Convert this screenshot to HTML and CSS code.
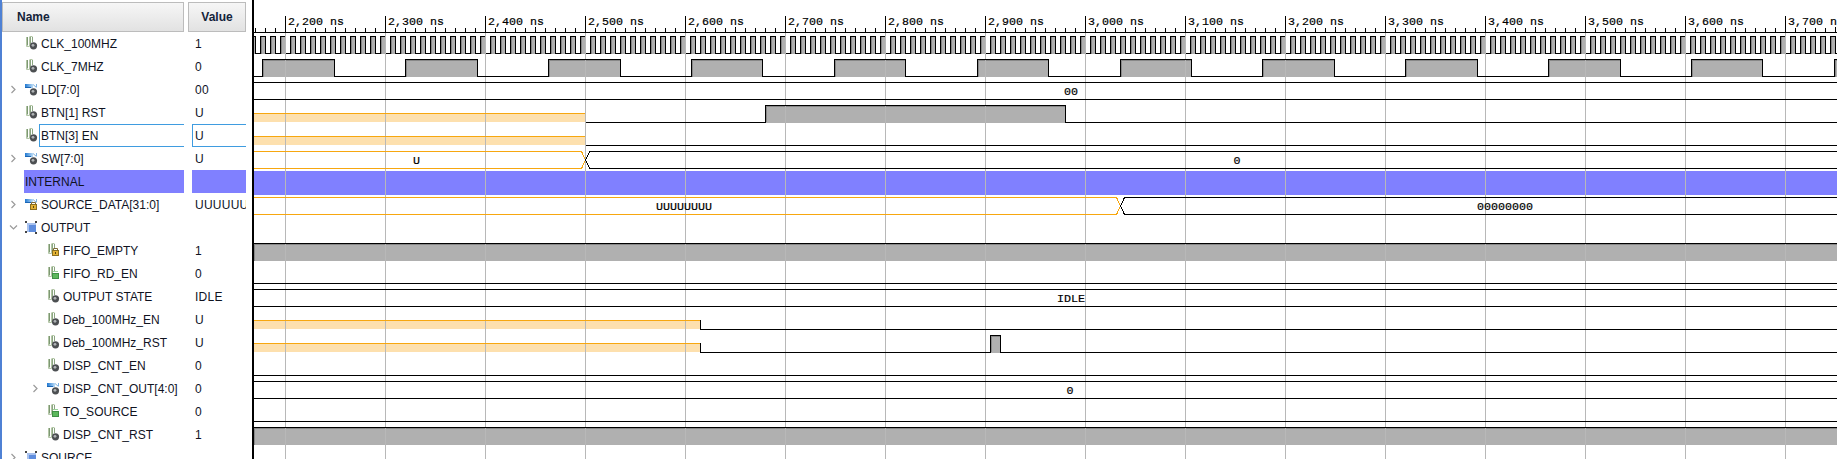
FILE: index.html
```html
<!DOCTYPE html>
<html lang="en">
<head>
<meta charset="utf-8">
<title>Waveform viewer</title>
<link rel="stylesheet" href="styles.css">
</head>
<body>
<div class="app">
  <div class="stripe"></div>
  <div class="names">
    <div class="head head-name">Name</div>
    <div class="row"><span class="chev"></span><svg class="ic"><use href="#wave"/><use href="#ball"/></svg><span class="label">CLK_100MHZ</span></div>
    <div class="row"><span class="chev"></span><svg class="ic"><use href="#wave"/><use href="#ball"/></svg><span class="label">CLK_7MHZ</span></div>
    <div class="row"><span class="chev"><svg class="ch"><use href="#right"/></svg></span><svg class="ic"><use href="#bus"/><use href="#ball"/></svg><span class="label">LD[7:0]</span></div>
    <div class="row"><span class="chev"></span><svg class="ic"><use href="#wave"/><use href="#ball"/></svg><span class="label">BTN[1] RST</span></div>
    <div class="row"><span class="chev"></span><svg class="ic"><use href="#wave"/><use href="#ball"/></svg><span class="label sel">BTN[3] EN</span></div>
    <div class="row"><span class="chev"><svg class="ch"><use href="#right"/></svg></span><svg class="ic"><use href="#bus"/><use href="#ball"/></svg><span class="label">SW[7:0]</span></div>
    <div class="row"><span class="chev"></span><span class="label divider">INTERNAL</span></div>
    <div class="row"><span class="chev"><svg class="ch"><use href="#right"/></svg></span><svg class="ic"><use href="#bus"/><use href="#lock"/></svg><span class="label">SOURCE_DATA[31:0]</span></div>
    <div class="row"><span class="chev"><svg class="ch"><use href="#down"/></svg></span><svg class="ic"><use href="#group"/></svg><span class="label">OUTPUT</span></div>
    <div class="row in"><span class="chev"></span><svg class="ic"><use href="#wave"/><use href="#lock"/></svg><span class="label">FIFO_EMPTY</span></div>
    <div class="row in"><span class="chev"></span><svg class="ic"><use href="#wave"/><use href="#green"/></svg><span class="label">FIFO_RD_EN</span></div>
    <div class="row in"><span class="chev"></span><svg class="ic"><use href="#wave"/><use href="#ball"/></svg><span class="label">OUTPUT STATE</span></div>
    <div class="row in"><span class="chev"></span><svg class="ic"><use href="#wave"/><use href="#ball"/></svg><span class="label">Deb_100MHz_EN</span></div>
    <div class="row in"><span class="chev"></span><svg class="ic"><use href="#wave"/><use href="#ball"/></svg><span class="label">Deb_100MHz_RST</span></div>
    <div class="row in"><span class="chev"></span><svg class="ic"><use href="#wave"/><use href="#ball"/></svg><span class="label">DISP_CNT_EN</span></div>
    <div class="row in"><span class="chev"><svg class="ch"><use href="#right"/></svg></span><svg class="ic"><use href="#bus"/><use href="#ball"/></svg><span class="label">DISP_CNT_OUT[4:0]</span></div>
    <div class="row in"><span class="chev"></span><svg class="ic"><use href="#wave"/><use href="#green"/></svg><span class="label">TO_SOURCE</span></div>
    <div class="row in"><span class="chev"></span><svg class="ic"><use href="#wave"/><use href="#ball"/></svg><span class="label">DISP_CNT_RST</span></div>
    <div class="row"><span class="chev"><svg class="ch"><use href="#right"/></svg></span><svg class="ic"><use href="#group"/></svg><span class="label">SOURCE</span></div>
  </div>
  <div class="values">
    <div class="head head-value">Value</div>
    <div class="vrow"><span class="val">1</span></div>
    <div class="vrow"><span class="val">0</span></div>
    <div class="vrow"><span class="val">00</span></div>
    <div class="vrow"><span class="val">U</span></div>
    <div class="vrow"><span class="val sel">U</span></div>
    <div class="vrow"><span class="val">U</span></div>
    <div class="vrow"><span class="val divider"></span></div>
    <div class="vrow"><span class="val">UUUUUUUU</span></div>
    <div class="vrow"><span class="val"></span></div>
    <div class="vrow"><span class="val">1</span></div>
    <div class="vrow"><span class="val">0</span></div>
    <div class="vrow"><span class="val">IDLE</span></div>
    <div class="vrow"><span class="val">U</span></div>
    <div class="vrow"><span class="val">U</span></div>
    <div class="vrow"><span class="val">0</span></div>
    <div class="vrow"><span class="val">0</span></div>
    <div class="vrow"><span class="val">0</span></div>
    <div class="vrow"><span class="val">1</span></div>
  </div>
  <div class="rule"></div>
  <svg class="wave" viewBox="254 0 1583 459" width="1583" height="459">
    <defs>
      <linearGradient id="busfill" x1="0" x2="1" y1="0" y2="0">
        <stop offset="0" stop-color="#1f78d2"/>
        <stop offset="1" stop-color="#bcdcf6"/>
      </linearGradient>
      <g id="wave" fill="none">
        <path d="M2.500 1V10.500H5.500V1" stroke="#b3c6a6"/>
        <path d="M3.500 1V9.500" stroke="#7d9872"/>
        <path d="M6.500 1V8M8.500 1V6" stroke="#8ba681"/>
        <path d="M5.500 .5H8.500" stroke="#b3c6a6"/>
      </g>
      <g id="bus">
        <rect x="1" y="2" width="8" height="4" fill="url(#busfill)"/>
        <path d="M1 5.500H7" stroke="#1d66b4"/>
        <path d="M9 2.500L12.500 5.500M12.500 2V5" stroke="#7fb2e0" fill="none"/>
      </g>
      <g id="ball">
        <circle cx="9.500" cy="9.800" r="3.600" fill="#4c4f52"/>
        <circle cx="9" cy="9.300" r="1.400" fill="#b0b4b6"/>
      </g>
      <g id="lock">
        <path d="M7.500 7V5.500H11.500V7" fill="none" stroke="#7d6a35"/>
        <rect x="6.500" y="7.500" width="6" height="5" fill="#e3b234" stroke="#8a6f22"/>
        <rect x="9" y="9" width="1" height="2" fill="#5a4712"/>
      </g>
      <g id="green">
        <rect x="6.500" y="7.500" width="6" height="5" fill="#5cb85c" stroke="#3f8f45"/>
        <path d="M7 5.500H12" stroke="#9ad09a"/>
      </g>
      <g id="group">
        <rect x="3" y="3" width="9" height="9" fill="#a9c2ee"/>
        <rect x="5" y="5" width="7" height="7" fill="#5f8ddd"/>
        <path d="M1 1h2v2h-2zM11 1h2v2h-2zM1 11h2v2h-2zM11 12h2v2h-2z" fill="#444"/>
      </g>
      <path id="right" d="M2.500 1L6 4.500L2.500 8" fill="none" stroke="#9a9a9a" stroke-width="1.200"/>
      <path id="down" d="M1 2.500L4.500 6L8 2.500" fill="none" stroke="#9a9a9a" stroke-width="1.200"/>
      <pattern id="ruler" patternUnits="userSpaceOnUse" x="285" y="16" width="100" height="17">
        <path class="line" d="M.5 0V16M10.500 12V16M20.500 12V16M30.500 12V16M40.500 12V16M50.500 11V16M60.500 12V16M70.500 12V16M80.500 12V16M90.500 12V16M0 16.500H100"/>
      </pattern>
      <pattern id="clock" patternUnits="userSpaceOnUse" x="250" y="36" width="10" height="18">
        <rect x="1" y="1" width="4" height="17" fill="#b0b0b0"/>
        <rect x="1" y="1" width="1" height="17" fill="#858585"/>
        <path class="line" d="M0 .5H6M.5 0V18M5.500 0V18M5 17.500H10"/>
      </pattern>
      <pattern id="grid" patternUnits="userSpaceOnUse" x="285" y="33" width="100" height="10">
        <rect x="0" y="0" width="1" height="10" fill="#b8b8b8"/>
      </pattern>
      <clipPath id="c7">
        <path d="M254 76V59.500H254V76.500H262.500V59.500H334.500V76.500H405.500V59.500H477.500V76.500H548.500V59.500H620.500V76.500H691.500V59.500H762.500V76.500H834.500V59.500H905.500V76.500H977.500V59.500H1048.500V76.500H1120.500V59.500H1191.500V76.500H1262.500V59.500H1334.500V76.500H1405.500V59.500H1477.500V76.500H1548.500V59.500H1620.500V76.500H1691.500V59.500H1762.500V76.500H1834.500V59.500H1837V77H254Z"/>
      </clipPath>
    </defs>

    <rect class="ruler" x="254" y="16" width="1583" height="17"/>

    <g class="fills">
      <rect x="254" y="36" width="1583" height="18" fill="url(#clock)"/>
      <g clip-path="url(#c7)">
        <rect class="grey" x="254" y="59" width="1583" height="18"/>
        <path class="shade" d="M263.500 60.500V77M406.500 60.500V77M549.500 60.500V77M692.500 60.500V77M835.500 60.500V77M978.500 60.500V77M1121.500 60.500V77M1263.500 60.500V77M1406.500 60.500V77M1549.500 60.500V77M1692.500 60.500V77M1835.500 60.500V77M254 60.500H1837"/>
      </g>
      <rect class="band" x="254" y="113" width="331" height="9"/>
      <rect class="band" x="254" y="136" width="331" height="9"/>
      <rect class="band" x="254" y="320" width="446" height="9"/>
      <rect class="band" x="254" y="343" width="446" height="9"/>
      <rect class="grey" x="766" y="106" width="300" height="17"/>
      <path class="shade" d="M766.500 106.500H1065M766.500 106V122"/>
      <rect class="grey" x="991" y="336" width="9" height="17"/>
      <path class="shade" d="M991.500 336.500H1000M991.500 336V352"/>
      <rect class="internal" x="254" y="171" width="1583" height="24"/>
      <rect class="grey" x="255" y="244" width="1582" height="17"/>
      <path class="shade" d="M254 244.500H1837M254.500 244V261"/>
      <rect class="grey" x="255" y="428" width="1582" height="17"/>
      <path class="shade" d="M254 428.500H1837M254.500 428V445"/>
    </g>

    <rect x="254" y="33" width="1583" height="426" fill="url(#grid)"/>

    <path class="orange" d="M254 113.500H585M254 136.500H585M254 320.500H700M254 343.500H700M254 151.500H581.500L585.500 160L581.500 168.500H254M254 197.500H1116.500L1120.500 206L1116.500 214.500H254"/>
    <path class="line" d="M254 76.500H262.500V59.500H334.500V76.500H405.500V59.500H477.500V76.500H548.500V59.500H620.500V76.500H691.500V59.500H762.500V76.500H834.500V59.500H905.500V76.500H977.500V59.500H1048.500V76.500H1120.500V59.500H1191.500V76.500H1262.500V59.500H1334.500V76.500H1405.500V59.500H1477.500V76.500H1548.500V59.500H1620.500V76.500H1691.500V59.500H1762.500V76.500H1834.500V59.500H1837"/>
    <path class="line" d="M254 82.500H1837M254 99.500H1837"/>
    <path class="line" d="M586 122.500H765.500V105.500H1065.500V122.500H1837"/>
    <path class="line" d="M586 145.500H1837"/>
    <path class="line" d="M1837 151.500H590L585.500 160L590 168.500H1837"/>
    <path class="line" d="M1837 197.500H1124.500L1120.500 206L1124.500 214.500H1837"/>
    <path class="line" d="M1837 243.500H254"/>
    <path class="line" d="M254 283.500H1837"/>
    <path class="line" d="M254 289.500H1837M254 306.500H1837"/>
    <path class="line" d="M700.500 320V329.500H1837"/>
    <path class="line" d="M700.500 343V352.500H990.500V335.500H1000.500V352.500H1837"/>
    <path class="line" d="M254 375.500H1837"/>
    <path class="line" d="M254 381.500H1837M254 398.500H1837"/>
    <path class="line" d="M254 421.500H1837"/>
    <path class="line" d="M1837 427.500H254"/>

    <g class="stamp">
      <text x="288" y="25">2,200 ns</text>
      <text x="388" y="25">2,300 ns</text>
      <text x="488" y="25">2,400 ns</text>
      <text x="588" y="25">2,500 ns</text>
      <text x="688" y="25">2,600 ns</text>
      <text x="788" y="25">2,700 ns</text>
      <text x="888" y="25">2,800 ns</text>
      <text x="988" y="25">2,900 ns</text>
      <text x="1088" y="25">3,000 ns</text>
      <text x="1188" y="25">3,100 ns</text>
      <text x="1288" y="25">3,200 ns</text>
      <text x="1388" y="25">3,300 ns</text>
      <text x="1488" y="25">3,400 ns</text>
      <text x="1588" y="25">3,500 ns</text>
      <text x="1688" y="25">3,600 ns</text>
      <text x="1788" y="25">3,700 ns</text>
    </g>
    <g class="stamp mid">
      <text x="1071" y="95">00</text>
      <text x="416.500" y="164">U</text>
      <text x="1237" y="164">0</text>
      <text x="684" y="210">UUUUUUUU</text>
      <text x="1505" y="210">00000000</text>
      <text x="1071" y="302">IDLE</text>
      <text x="1070" y="394">0</text>
    </g>
  </svg>
</div>
</body>
</html>
```
FILE: styles.css
```css
html, body {
  margin: 0;
  padding: 0;
  background: #fff;
}

.app {
  display: flex;
  height: 459px;
  overflow: hidden;
  font-family: "Liberation Sans", Arial, sans-serif;
  font-size: 12px;
  color: #10131f;
}

.stripe {
  width: 2px;
  flex: none;
  background: #4f81d4;
}

.names {
  width: 182px;
  flex: none;
}

.values {
  width: 58px;
  flex: none;
  margin-left: 4px;
}

.rule {
  width: 2px;
  flex: none;
  margin-left: 6px;
  background: #000;
}

.head {
  box-sizing: border-box;
  height: 30px;
  margin: 2px 0 0;
  display: flex;
  align-items: center;
  border: 1px solid #bcbcbc;
  background: linear-gradient(#f6f6f6, #e2e2e2);
  font-weight: bold;
  color: #14233a;
}

.head-name {
  padding-left: 14px;
}

.head-value {
  justify-content: center;
}

.row {
  height: 23px;
  display: flex;
  align-items: center;
}

.row.in {
  padding-left: 22px;
}

.chev {
  width: 22px;
  flex: none;
  display: flex;
  justify-content: center;
  align-items: center;
  height: 23px;
}

.ch {
  width: 9px;
  height: 9px;
  display: block;
}

.ic {
  width: 15px;
  height: 15px;
  flex: none;
  display: block;
}

.label {
  flex: 1;
  box-sizing: border-box;
  height: 23px;
  line-height: 25px;
  padding-left: 2px;
  white-space: nowrap;
}

.label.sel {
  border: 1px solid #3f9ce0;
  border-right: 0;
  line-height: 23px;
  padding-left: 1px;
}

.label.divider {
  background: #8080ff;
  padding-left: 1px;
}

.vrow {
  height: 23px;
  padding-left: 4px;
}

.val {
  display: block;
  box-sizing: border-box;
  height: 23px;
  line-height: 25px;
  padding-left: 3px;
  overflow: hidden;
  white-space: nowrap;
  letter-spacing: 0.25px;
}

.val.sel {
  border: 1px solid #3f9ce0;
  border-right: 0;
  line-height: 23px;
  padding-left: 2px;
}

.val.divider {
  background: #8080ff;
}

.wave {
  flex: none;
  display: block;
  shape-rendering: crispEdges;
}

.ic, .ch {
  shape-rendering: auto;
}

.ruler {
  fill: url(#ruler);
}

.line {
  fill: none;
  stroke: #000;
  stroke-width: 1;
}

.orange {
  fill: none;
  stroke: #f7a70f;
  stroke-width: 1;
}

.grey {
  fill: #b0b0b0;
}

.shade {
  fill: none;
  stroke: #888;
  stroke-width: 1;
}

.band {
  fill: #fde0ae;
}

.internal {
  fill: #8080ff;
}

.stamp {
  font-family: "Liberation Mono", "Courier New", monospace;
  font-size: 11.67px;
  fill: #000;
  stroke: #000;
  stroke-width: 0.2px;
}

.stamp.mid {
  text-anchor: middle;
}
```
